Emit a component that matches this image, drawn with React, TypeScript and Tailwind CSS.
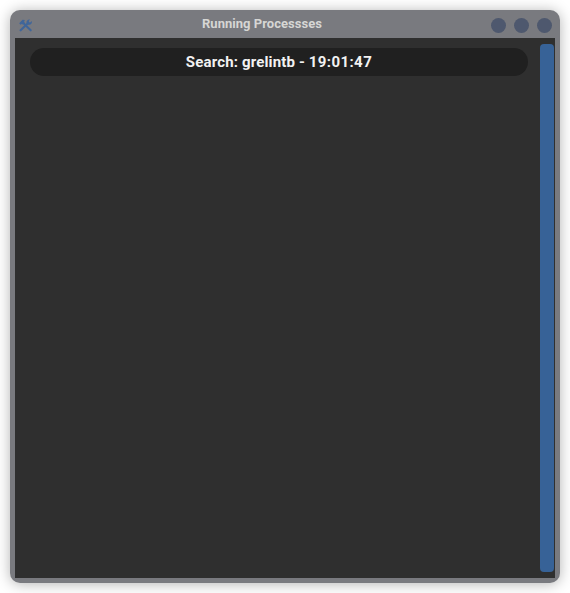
function ToolsIcon() {
  return (
    <svg width="14" height="13" viewBox="0 0 14 13" fill="none" stroke="#40669a">
      <path d="M3.5 3.2 11.7 11.3" strokeWidth="2.1" strokeLinecap="round" />
      <path d="M1.6 11.3 9.1 4" strokeWidth="2.2" strokeLinecap="round" />
      <path d="M0.2 4.2 3.5 0.7 6 1 5.1 2.3 5.6 3.5 3.6 5.6 2.8 4.9 1.4 5.7Z" fill="#40669a" stroke="none" />
      <path d="M11 0.5 9.8 2.1 10 3.3 11.2 3.5 12.8 2.1C13.4 4.6 11.5 6.4 9.2 5.7L7.6 4.2C7 2 8.6 0.1 11 0.5Z" fill="#40669a" stroke="none" />
    </svg>
  );
}

export default function App() {
  return (
    <div className="h-[593px] w-[570px] overflow-hidden bg-white p-[10px] font-['Roboto','Liberation_Sans',sans-serif] font-bold">
      <main className="flex h-[573px] w-[550px] flex-col rounded-[10px] bg-[#797a7f] px-[5px] pb-[5px] shadow-[0_1px_14px_rgba(0,0,0,0.3)]">
        <header className="flex h-7 shrink-0 pl-1 pr-[3px]">
          <div className="w-[183px] pt-[9px]">
            <ToolsIcon />
          </div>
          <h1 className="flex-1 whitespace-nowrap pt-[5px] text-[13px] leading-[17px] tracking-[0.03px] text-[#d6d6d4]">Running Processses</h1>
          <div className="flex gap-2 pt-2">
            <span className="size-[15px] rounded-full bg-[#4e586e]" />
            <span className="size-[15px] rounded-full bg-[#4e586e]" />
            <span className="size-[15px] rounded-full bg-[#4e586e]" />
          </div>
        </header>
        <section className="flex flex-1 justify-between bg-[#2f2f2f] pl-[15px] pr-px">
          <div className="mt-[10px] flex h-7 w-[498px] items-center justify-center rounded-full bg-[#202020] text-[15px] leading-5 text-[#f2f2f2]">
            <p className="tracking-[0.15px]">
              Search: grelintb - <span className="tracking-[0.4px]">19:01:47</span>
            </p>
          </div>
          <div className="my-[6px] w-[14px] rounded-[4px] bg-[#376297]" />
        </section>
      </main>
    </div>
  );
}
